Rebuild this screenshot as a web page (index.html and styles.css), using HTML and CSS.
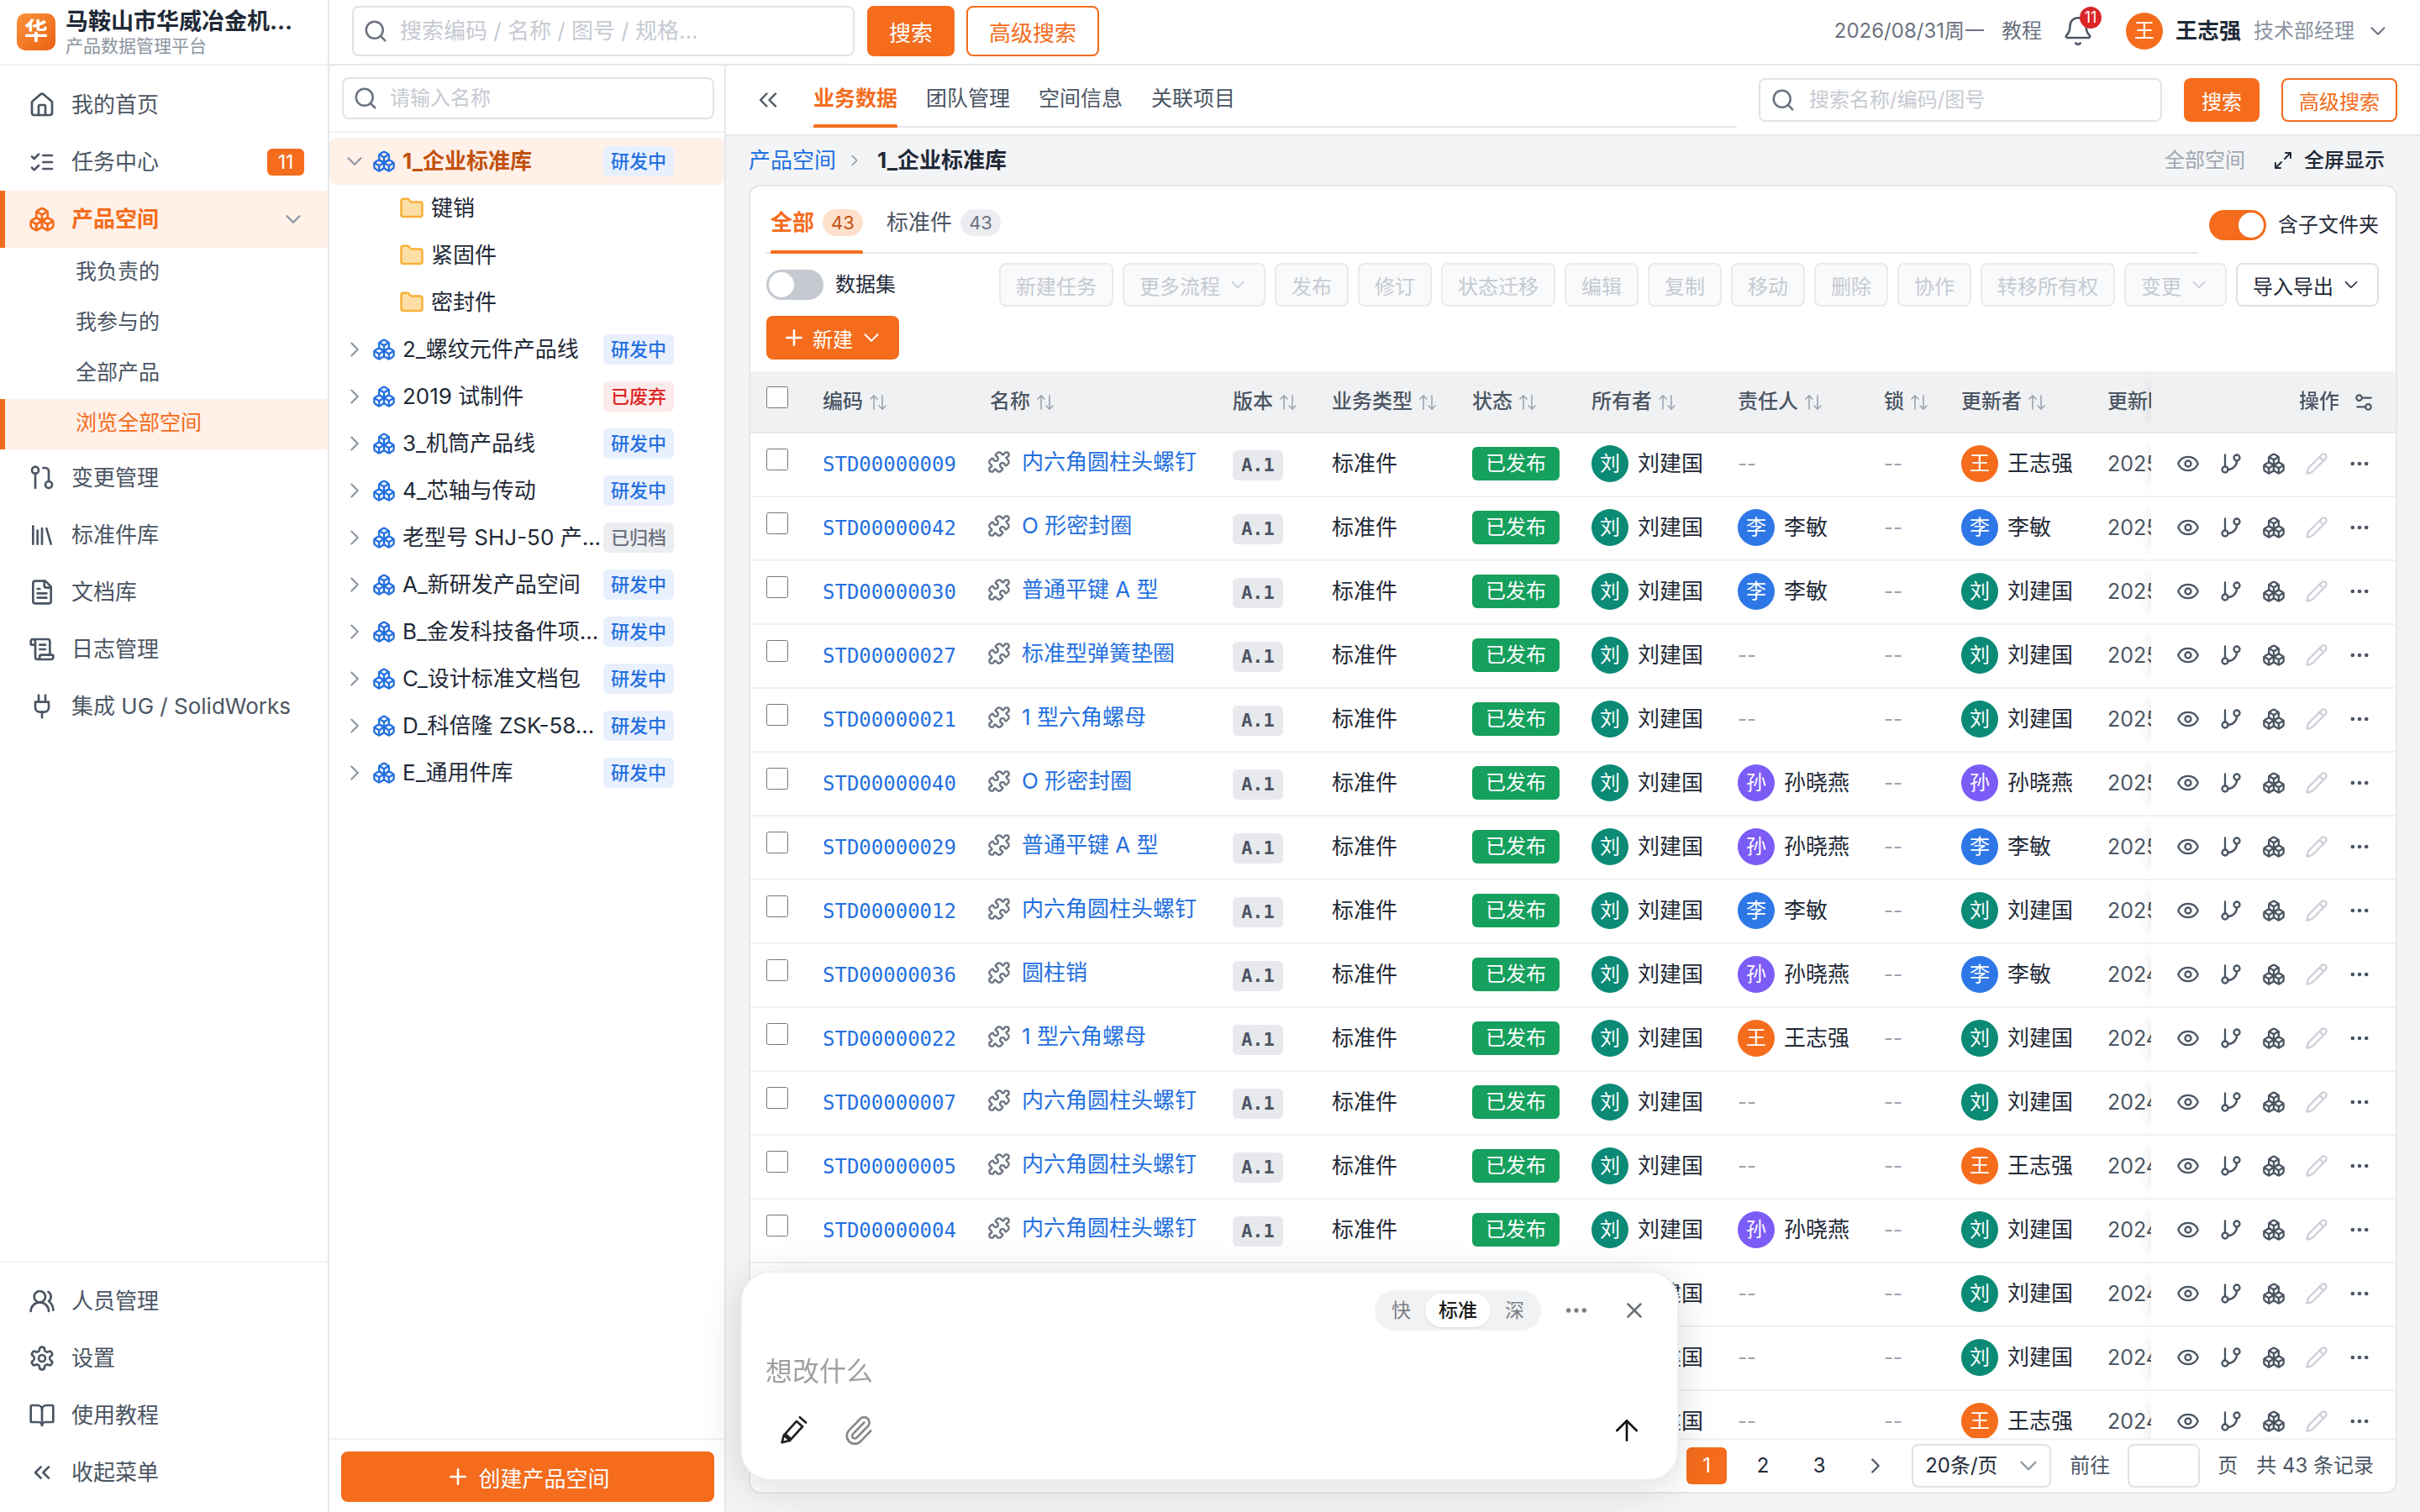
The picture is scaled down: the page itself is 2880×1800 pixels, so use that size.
FILE: index.html
```html
<!DOCTYPE html>
<html lang="zh-CN">
<head>
    <meta charset="UTF-8">
    <meta name="viewport" content="width=device-width, initial-scale=1.0">
    <title>产品空间</title>
    <link rel="stylesheet" href="styles.css">
</head>
<body>
    <svg class="sprite" xmlns="http://www.w3.org/2000/svg">
        <symbol id="boxes" viewBox="0 0 24 24"><path d="M2.97 12.92A2 2 0 0 0 2 14.63v3.24a2 2 0 0 0 .97 1.71l3 1.8a2 2 0 0 0 2.06 0L12 19v-5.5l-5-3-4.03 2.42Z"/><path d="m7 16.5-4.74-2.85"/><path d="m7 16.5 5-3"/><path d="M7 16.5v5.17"/><path d="M12 13.5V19l3.97 2.38a2 2 0 0 0 2.06 0l3-1.8a2 2 0 0 0 .97-1.71v-3.24a2 2 0 0 0-.97-1.71L17 10.5l-5 3Z"/><path d="m17 16.5-5-3"/><path d="m17 16.5 4.74-2.85"/><path d="M17 16.5v5.17"/><path d="M7.97 4.42A2 2 0 0 0 7 6.13v4.37l5 3 5-3V6.13a2 2 0 0 0-.97-1.71l-3-1.8a2 2 0 0 0-2.06 0l-3 1.8Z"/><path d="M12 8 7.26 5.15"/><path d="m12 8 4.74-2.85"/><path d="M12 13.5V8"/></symbol>
        <symbol id="house" viewBox="0 0 24 24"><path d="M15 21v-8a1 1 0 0 0-1-1h-4a1 1 0 0 0-1 1v8"/><path d="M3 10a2 2 0 0 1 .709-1.528l7-5.999a2 2 0 0 1 2.582 0l7 5.999A2 2 0 0 1 21 10v9a2 2 0 0 1-2 2H5a2 2 0 0 1-2-2z"/></symbol>
        <symbol id="checks" viewBox="0 0 24 24"><path d="m3 17 2 2 4-4"/><path d="m3 7 2 2 4-4"/><path d="M13 6h8"/><path d="M13 12h8"/><path d="M13 18h8"/></symbol>
        <symbol id="change" viewBox="0 0 24 24"><circle cx="6" cy="5" r="3"/><path d="M6 8v13"/><path d="M13 3h2a3 3 0 0 1 3 3v9"/><circle cx="18" cy="18" r="3"/></symbol>
        <symbol id="library" viewBox="0 0 24 24"><path d="m16 6 4 14"/><path d="M12 6v14"/><path d="M8 8v12"/><path d="M4 4v16"/></symbol>
        <symbol id="file" viewBox="0 0 24 24"><path d="M15 2H6a2 2 0 0 0-2 2v16a2 2 0 0 0 2 2h12a2 2 0 0 0 2-2V7Z"/><path d="M14 2v4a2 2 0 0 0 2 2h4"/><path d="M10 9H8"/><path d="M16 13H8"/><path d="M16 17H8"/></symbol>
        <symbol id="scroll" viewBox="0 0 24 24"><path d="M15 12h-5"/><path d="M15 8h-5"/><path d="M19 17V5a2 2 0 0 0-2-2H4"/><path d="M8 21h12a2 2 0 0 0 2-2v-1a1 1 0 0 0-1-1H11a1 1 0 0 0-1 1v1a2 2 0 1 1-4 0V5a2 2 0 1 0-4 0v2a1 1 0 0 0 1 1h3"/></symbol>
        <symbol id="plug" viewBox="0 0 24 24"><path d="M12 22v-5"/><path d="M9 8V2"/><path d="M15 8V2"/><path d="M18 8v5a4 4 0 0 1-4 4h-4a4 4 0 0 1-4-4V8Z"/></symbol>
        <symbol id="users" viewBox="0 0 24 24"><path d="M18 21a8 8 0 0 0-16 0"/><circle cx="10" cy="8" r="5"/><path d="M22 20c0-3.37-2-6.5-4-8a5 5 0 0 0-.45-8.3"/></symbol>
        <symbol id="gear" viewBox="0 0 24 24"><path d="M12.22 2h-.44a2 2 0 0 0-2 2v.18a2 2 0 0 1-1 1.73l-.43.25a2 2 0 0 1-2 0l-.15-.08a2 2 0 0 0-2.73.73l-.22.38a2 2 0 0 0 .73 2.73l.15.1a2 2 0 0 1 1 1.72v.51a2 2 0 0 1-1 1.74l-.15.09a2 2 0 0 0-.73 2.73l.22.38a2 2 0 0 0 2.73.73l.15-.08a2 2 0 0 1 2 0l.43.25a2 2 0 0 1 1 1.73V20a2 2 0 0 0 2 2h.44a2 2 0 0 0 2-2v-.18a2 2 0 0 1 1-1.73l.43-.25a2 2 0 0 1 2 0l.15.08a2 2 0 0 0 2.73-.73l.22-.39a2 2 0 0 0-.73-2.73l-.15-.08a2 2 0 0 1-1-1.74v-.5a2 2 0 0 1 1-1.74l.15-.09a2 2 0 0 0 .73-2.73l-.22-.38a2 2 0 0 0-2.73-.73l-.15.08a2 2 0 0 1-2 0l-.43-.25a2 2 0 0 1-1-1.73V4a2 2 0 0 0-2-2z"/><circle cx="12" cy="12" r="3"/></symbol>
        <symbol id="book" viewBox="0 0 24 24"><path d="M12 7v14"/><path d="M3 18a1 1 0 0 1-1-1V4a1 1 0 0 1 1-1h5a4 4 0 0 1 4 4 4 4 0 0 1 4-4h5a1 1 0 0 1 1 1v13a1 1 0 0 1-1 1h-6a3 3 0 0 0-3 3 3 3 0 0 0-3-3z"/></symbol>
        <symbol id="dleft" viewBox="0 0 24 24"><path d="m11 17-5-5 5-5"/><path d="m18 17-5-5 5-5"/></symbol>
        <symbol id="search" viewBox="0 0 24 24"><circle cx="11" cy="11" r="8"/><path d="m21 21-4.3-4.3"/></symbol>
        <symbol id="bell" viewBox="0 0 24 24"><path d="M10.268 21a2 2 0 0 0 3.464 0"/><path d="M3.262 15.326A1 1 0 0 0 4 17h16a1 1 0 0 0 .74-1.673C19.41 13.956 18 12.499 18 8A6 6 0 0 0 6 8c0 4.499-1.411 5.956-2.738 7.326"/></symbol>
        <symbol id="puzzle" viewBox="0 0 24 24"><path d="M15.39 4.39a1 1 0 0 0 1.68-.474 2.5 2.5 0 1 1 3.014 3.015 1 1 0 0 0-.474 1.68l1.683 1.682a2.414 2.414 0 0 1 0 3.414L19.61 15.39a1 1 0 0 1-1.68-.474 2.5 2.5 0 1 0-3.014 3.015 1 1 0 0 1 .474 1.68l-1.683 1.682a2.414 2.414 0 0 1-3.414 0L8.61 19.61a1 1 0 0 0-1.68.474 2.5 2.5 0 1 1-3.014-3.015 1 1 0 0 0 .474-1.68l-1.683-1.682a2.414 2.414 0 0 1 0-3.414L4.39 8.61a1 1 0 0 1 1.68.474 2.5 2.5 0 1 0 3.014-3.015 1 1 0 0 1-.474-1.68l1.683-1.682a2.414 2.414 0 0 1 3.414 0z"/></symbol>
        <symbol id="eye" viewBox="0 0 24 24"><path d="M2.062 12.348a1 1 0 0 1 0-.696 10.75 10.75 0 0 1 19.876 0 1 1 0 0 1 0 .696 10.75 10.75 0 0 1-19.876 0"/><circle cx="12" cy="12" r="3"/></symbol>
        <symbol id="branch" viewBox="0 0 24 24"><path d="M6 3v12"/><circle cx="18" cy="6" r="3"/><circle cx="6" cy="18" r="3"/><path d="M18 9a9 9 0 0 1-9 9"/></symbol>
        <symbol id="pencil" viewBox="0 0 24 24"><path d="M21.174 6.812a1 1 0 0 0-3.986-3.987L3.842 16.174a2 2 0 0 0-.5.83l-1.321 4.352a.5.5 0 0 0 .623.622l4.353-1.32a2 2 0 0 0 .83-.497z"/><path d="m15 5 4 4"/></symbol>
        <symbol id="pen" viewBox="0 0 24 24"><path d="M5 15.5 14.5 5l4.5 4L9.500 19.500z"/><path d="M5 15.500 3.500 21l6-1.500"/><path d="m17 2 4.500 4"/><path d="m6.500 15 3 2.700"/></symbol>
        <symbol id="dots" viewBox="0 0 24 24"><circle cx="12" cy="12" r="1"/><circle cx="19" cy="12" r="1"/><circle cx="5" cy="12" r="1"/></symbol>
        <symbol id="expand" viewBox="0 0 24 24"><path d="M15 3h6v6"/><path d="m21 3-7 7"/><path d="m3 21 7-7"/><path d="M9 21H3v-6"/></symbol>
        <symbol id="sliders" viewBox="0 0 24 24"><path d="M20 7h-9"/><path d="M14 17H5"/><circle cx="17" cy="17" r="3"/><circle cx="7" cy="7" r="3"/></symbol>
        <symbol id="clip" viewBox="0 0 24 24"><path d="M13.234 20.252 21 12.3"/><path d="m16 6-8.414 8.586a2 2 0 0 0 0 2.828 2 2 0 0 0 2.828 0l8.414-8.586a4 4 0 0 0 0-5.656 4 4 0 0 0-5.656 0l-8.415 8.585a6 6 0 1 0 8.486 8.486"/></symbol>
        <symbol id="up" viewBox="0 0 24 24"><path d="m5 12 7-7 7 7"/><path d="M12 19V5"/></symbol>
        <symbol id="close" viewBox="0 0 24 24"><path d="M18 6 6 18"/><path d="m6 6 12 12"/></symbol>
        <symbol id="plus" viewBox="0 0 24 24"><path d="M5 12h14"/><path d="M12 5v14"/></symbol>
        <symbol id="down" viewBox="0 0 24 24"><path d="m6 9 6 6 6-6"/></symbol>
        <symbol id="right" viewBox="0 0 24 24"><path d="m9 18 6-6-6-6"/></symbol>
        <symbol id="sort" viewBox="0 0 24 24"><path d="m21 16-4 4-4-4"/><path d="M17 20V4"/><path d="m3 8 4-4 4 4"/><path d="M7 4v16"/></symbol>
        <symbol id="folder" viewBox="0 0 24 24"><path d="M20 20a2 2 0 0 0 2-2V8a2 2 0 0 0-2-2h-7.9a2 2 0 0 1-1.69-.9L9.6 3.9A2 2 0 0 0 7.93 3H4a2 2 0 0 0-2 2v13a2 2 0 0 0 2 2Z"/></symbol>
    </svg>

    <div class="app">
        <aside class="sidebar">
            <div class="brand">
                <div class="logo">华</div>
                <div class="brand-text">
                    <div class="brand-name">马鞍山市华威冶金机...</div>
                    <div class="brand-sub">产品数据管理平台</div>
                </div>
            </div>
            <nav class="nav">
                <a class="nav-item"><svg class="ic"><use href="#house"/></svg>我的首页</a>
                <a class="nav-item"><svg class="ic"><use href="#checks"/></svg>任务中心<span class="nav-count">11</span></a>
                <a class="nav-item active"><svg class="ic"><use href="#boxes"/></svg>产品空间<svg class="ic nav-caret"><use href="#down"/></svg></a>
                <a class="nav-sub">我负责的</a>
                <a class="nav-sub">我参与的</a>
                <a class="nav-sub">全部产品</a>
                <a class="nav-sub active">浏览全部空间</a>
                <a class="nav-item"><svg class="ic"><use href="#change"/></svg>变更管理</a>
                <a class="nav-item"><svg class="ic"><use href="#library"/></svg>标准件库</a>
                <a class="nav-item"><svg class="ic"><use href="#file"/></svg>文档库</a>
                <a class="nav-item"><svg class="ic"><use href="#scroll"/></svg>日志管理</a>
                <a class="nav-item"><svg class="ic"><use href="#plug"/></svg>集成 UG / SolidWorks</a>
            </nav>
            <nav class="nav-bottom">
                <a class="nav-item"><svg class="ic"><use href="#users"/></svg>人员管理</a>
                <a class="nav-item"><svg class="ic"><use href="#gear"/></svg>设置</a>
                <a class="nav-item"><svg class="ic"><use href="#book"/></svg>使用教程</a>
                <a class="nav-item"><svg class="ic"><use href="#dleft"/></svg>收起菜单</a>
            </nav>
        </aside>

        <div class="main">
            <header class="topbar">
                <div class="search search-top"><svg class="ic"><use href="#search"/></svg><span>搜索编码 / 名称 / 图号 / 规格...</span></div>
                <button class="btn btn-primary btn-top">搜索</button>
                <button class="btn btn-outline btn-top">高级搜索</button>
                <div class="top-right">
                    <span class="top-date">2026/08/31周一</span>
                    <span class="top-link">教程</span>
                    <span class="bell"><svg class="ic"><use href="#bell"/></svg><b class="bell-count">11</b></span>
                    <span class="user"><i class="av orange">王</i><b class="user-name">王志强</b><span class="user-role">技术部经理</span><svg class="ic user-caret"><use href="#down"/></svg></span>
                </div>
            </header>

            <div class="body">
                <section class="tree">
                    <div class="tree-search">
                        <div class="search"><svg class="ic"><use href="#search"/></svg><span>请输入名称</span></div>
                    </div>
                    <div class="tree-list">
                        <div class="tree-row selected"><svg class="ic caret"><use href="#down"/></svg><svg class="ic cube"><use href="#boxes"/></svg><span class="tree-name">1_企业标准库</span><span class="tag blue">研发中</span></div>
                        <div class="tree-row child"><svg class="ic folder"><use href="#folder"/></svg><span class="tree-name">键销</span></div>
                        <div class="tree-row child"><svg class="ic folder"><use href="#folder"/></svg><span class="tree-name">紧固件</span></div>
                        <div class="tree-row child"><svg class="ic folder"><use href="#folder"/></svg><span class="tree-name">密封件</span></div>
                        <div class="tree-row"><svg class="ic caret"><use href="#right"/></svg><svg class="ic cube"><use href="#boxes"/></svg><span class="tree-name">2_螺纹元件产品线</span><span class="tag blue">研发中</span></div>
                        <div class="tree-row"><svg class="ic caret"><use href="#right"/></svg><svg class="ic cube"><use href="#boxes"/></svg><span class="tree-name">2019 试制件</span><span class="tag red">已废弃</span></div>
                        <div class="tree-row"><svg class="ic caret"><use href="#right"/></svg><svg class="ic cube"><use href="#boxes"/></svg><span class="tree-name">3_机筒产品线</span><span class="tag blue">研发中</span></div>
                        <div class="tree-row"><svg class="ic caret"><use href="#right"/></svg><svg class="ic cube"><use href="#boxes"/></svg><span class="tree-name">4_芯轴与传动</span><span class="tag blue">研发中</span></div>
                        <div class="tree-row"><svg class="ic caret"><use href="#right"/></svg><svg class="ic cube"><use href="#boxes"/></svg><span class="tree-name">老型号 SHJ-50 产...</span><span class="tag gray">已归档</span></div>
                        <div class="tree-row"><svg class="ic caret"><use href="#right"/></svg><svg class="ic cube"><use href="#boxes"/></svg><span class="tree-name">A_新研发产品空间</span><span class="tag blue">研发中</span></div>
                        <div class="tree-row"><svg class="ic caret"><use href="#right"/></svg><svg class="ic cube"><use href="#boxes"/></svg><span class="tree-name">B_金发科技备件项...</span><span class="tag blue">研发中</span></div>
                        <div class="tree-row"><svg class="ic caret"><use href="#right"/></svg><svg class="ic cube"><use href="#boxes"/></svg><span class="tree-name">C_设计标准文档包</span><span class="tag blue">研发中</span></div>
                        <div class="tree-row"><svg class="ic caret"><use href="#right"/></svg><svg class="ic cube"><use href="#boxes"/></svg><span class="tree-name">D_科倍隆 ZSK-58...</span><span class="tag blue">研发中</span></div>
                        <div class="tree-row"><svg class="ic caret"><use href="#right"/></svg><svg class="ic cube"><use href="#boxes"/></svg><span class="tree-name">E_通用件库</span><span class="tag blue">研发中</span></div>
                    </div>
                    <div class="tree-foot">
                        <button class="btn btn-primary btn-create"><svg class="ic"><use href="#plus"/></svg>创建产品空间</button>
                    </div>
                </section>

                <section class="content">
                    <div class="tabbar">
                        <svg class="ic tab-back"><use href="#dleft"/></svg>
                        <div class="tabs">
                            <a class="tab active">业务数据</a>
                            <a class="tab">团队管理</a>
                            <a class="tab">空间信息</a>
                            <a class="tab">关联项目</a>
                        </div>
                        <div class="search search-tab"><svg class="ic"><use href="#search"/></svg><span>搜索名称/编码/图号</span></div>
                        <button class="btn btn-primary btn-small">搜索</button>
                        <button class="btn btn-outline btn-small">高级搜索</button>
                    </div>

                    <div class="crumb">
                        <a class="crumb-link">产品空间</a>
                        <svg class="ic crumb-sep"><use href="#right"/></svg>
                        <span class="crumb-title">1_企业标准库</span>
                        <span class="crumb-all">全部空间</span>
                        <span class="crumb-full"><svg class="ic"><use href="#expand"/></svg>全屏显示</span>
                    </div>

                    <div class="card">
                        <div class="card-head">
                            <div class="card-tabs">
                                <a class="card-tab active">全部<span class="count">43</span></a>
                                <a class="card-tab">标准件<span class="count">43</span></a>
                            </div>
                            <span class="switch on"></span>
                            <span class="switch-label head-label">含子文件夹</span>
                        </div>
                        <div class="toolbar">
                            <span class="switch"></span>
                            <span class="switch-label">数据集</span>
                            <div class="tool-btns">
                                <button class="tool" disabled>新建任务</button>
                                <button class="tool" disabled>更多流程<svg class="ic"><use href="#down"/></svg></button>
                                <button class="tool" disabled>发布</button>
                                <button class="tool" disabled>修订</button>
                                <button class="tool" disabled>状态迁移</button>
                                <button class="tool" disabled>编辑</button>
                                <button class="tool" disabled>复制</button>
                                <button class="tool" disabled>移动</button>
                                <button class="tool" disabled>删除</button>
                                <button class="tool" disabled>协作</button>
                                <button class="tool" disabled>转移所有权</button>
                                <button class="tool" disabled>变更<svg class="ic"><use href="#down"/></svg></button>
                                <button class="tool tool-on">导入导出<svg class="ic"><use href="#down"/></svg></button>
                            </div>
                        </div>
                        <div class="new-row">
                            <button class="btn btn-primary btn-new"><svg class="ic"><use href="#plus"/></svg>新建<svg class="ic new-caret"><use href="#down"/></svg></button>
                        </div>

                        <div class="table-wrap">
                            <table class="grid">
                                <colgroup>
                                    <col class="w-check"><col class="w-code"><col class="w-name"><col class="w-ver"><col class="w-type"><col class="w-state"><col class="w-user"><col class="w-user"><col class="w-lock"><col class="w-user"><col class="w-date"><col class="w-ops">
                                </colgroup>
                                <thead>
                                    <tr>
                                        <th><input type="checkbox"></th>
                                        <th>编码<svg class="ic sort"><use href="#sort"/></svg></th>
                                        <th>名称<svg class="ic sort"><use href="#sort"/></svg></th>
                                        <th>版本<svg class="ic sort"><use href="#sort"/></svg></th>
                                        <th>业务类型<svg class="ic sort"><use href="#sort"/></svg></th>
                                        <th>状态<svg class="ic sort"><use href="#sort"/></svg></th>
                                        <th>所有者<svg class="ic sort"><use href="#sort"/></svg></th>
                                        <th>责任人<svg class="ic sort"><use href="#sort"/></svg></th>
                                        <th>锁<svg class="ic sort"><use href="#sort"/></svg></th>
                                        <th>更新者<svg class="ic sort"><use href="#sort"/></svg></th>
                                        <th>更新时间<svg class="ic sort"><use href="#sort"/></svg></th>
                                        <th class="ops-head">操作<svg class="ic"><use href="#sliders"/></svg></th>
                                    </tr>
                                </thead>
                                <tbody>
                                    <tr><td><input type="checkbox"></td><td><a class="code">STD00000009</a></td><td><a class="part"><svg class="ic"><use href="#puzzle"/></svg>内六角圆柱头螺钉</a></td><td><span class="ver">A.1</span></td><td>标准件</td><td><span class="state">已发布</span></td><td><span class="person"><i class="av teal">刘</i>刘建国</span></td><td class="none">--</td><td class="none">--</td><td><span class="person"><i class="av orange">王</i>王志强</span></td><td class="date">2025-08-31 10:20</td><td class="ops"><div class="ops-icons"><svg class="ic"><use href="#eye"/></svg><svg class="ic"><use href="#branch"/></svg><svg class="ic"><use href="#boxes"/></svg><svg class="ic off"><use href="#pencil"/></svg><svg class="ic"><use href="#dots"/></svg></div></td></tr>
                                    <tr><td><input type="checkbox"></td><td><a class="code">STD00000042</a></td><td><a class="part"><svg class="ic"><use href="#puzzle"/></svg>O 形密封圈</a></td><td><span class="ver">A.1</span></td><td>标准件</td><td><span class="state">已发布</span></td><td><span class="person"><i class="av teal">刘</i>刘建国</span></td><td><span class="person"><i class="av blue">李</i>李敏</span></td><td class="none">--</td><td><span class="person"><i class="av blue">李</i>李敏</span></td><td class="date">2025-08-30 16:05</td><td class="ops"><div class="ops-icons"><svg class="ic"><use href="#eye"/></svg><svg class="ic"><use href="#branch"/></svg><svg class="ic"><use href="#boxes"/></svg><svg class="ic off"><use href="#pencil"/></svg><svg class="ic"><use href="#dots"/></svg></div></td></tr>
                                    <tr><td><input type="checkbox"></td><td><a class="code">STD00000030</a></td><td><a class="part"><svg class="ic"><use href="#puzzle"/></svg>普通平键 A 型</a></td><td><span class="ver">A.1</span></td><td>标准件</td><td><span class="state">已发布</span></td><td><span class="person"><i class="av teal">刘</i>刘建国</span></td><td><span class="person"><i class="av blue">李</i>李敏</span></td><td class="none">--</td><td><span class="person"><i class="av teal">刘</i>刘建国</span></td><td class="date">2025-08-22 09:41</td><td class="ops"><div class="ops-icons"><svg class="ic"><use href="#eye"/></svg><svg class="ic"><use href="#branch"/></svg><svg class="ic"><use href="#boxes"/></svg><svg class="ic off"><use href="#pencil"/></svg><svg class="ic"><use href="#dots"/></svg></div></td></tr>
                                    <tr><td><input type="checkbox"></td><td><a class="code">STD00000027</a></td><td><a class="part"><svg class="ic"><use href="#puzzle"/></svg>标准型弹簧垫圈</a></td><td><span class="ver">A.1</span></td><td>标准件</td><td><span class="state">已发布</span></td><td><span class="person"><i class="av teal">刘</i>刘建国</span></td><td class="none">--</td><td class="none">--</td><td><span class="person"><i class="av teal">刘</i>刘建国</span></td><td class="date">2025-07-18 14:12</td><td class="ops"><div class="ops-icons"><svg class="ic"><use href="#eye"/></svg><svg class="ic"><use href="#branch"/></svg><svg class="ic"><use href="#boxes"/></svg><svg class="ic off"><use href="#pencil"/></svg><svg class="ic"><use href="#dots"/></svg></div></td></tr>
                                    <tr><td><input type="checkbox"></td><td><a class="code">STD00000021</a></td><td><a class="part"><svg class="ic"><use href="#puzzle"/></svg>1 型六角螺母</a></td><td><span class="ver">A.1</span></td><td>标准件</td><td><span class="state">已发布</span></td><td><span class="person"><i class="av teal">刘</i>刘建国</span></td><td class="none">--</td><td class="none">--</td><td><span class="person"><i class="av teal">刘</i>刘建国</span></td><td class="date">2025-06-11 11:30</td><td class="ops"><div class="ops-icons"><svg class="ic"><use href="#eye"/></svg><svg class="ic"><use href="#branch"/></svg><svg class="ic"><use href="#boxes"/></svg><svg class="ic off"><use href="#pencil"/></svg><svg class="ic"><use href="#dots"/></svg></div></td></tr>
                                    <tr><td><input type="checkbox"></td><td><a class="code">STD00000040</a></td><td><a class="part"><svg class="ic"><use href="#puzzle"/></svg>O 形密封圈</a></td><td><span class="ver">A.1</span></td><td>标准件</td><td><span class="state">已发布</span></td><td><span class="person"><i class="av teal">刘</i>刘建国</span></td><td><span class="person"><i class="av purple">孙</i>孙晓燕</span></td><td class="none">--</td><td><span class="person"><i class="av purple">孙</i>孙晓燕</span></td><td class="date">2025-05-29 08:56</td><td class="ops"><div class="ops-icons"><svg class="ic"><use href="#eye"/></svg><svg class="ic"><use href="#branch"/></svg><svg class="ic"><use href="#boxes"/></svg><svg class="ic off"><use href="#pencil"/></svg><svg class="ic"><use href="#dots"/></svg></div></td></tr>
                                    <tr><td><input type="checkbox"></td><td><a class="code">STD00000029</a></td><td><a class="part"><svg class="ic"><use href="#puzzle"/></svg>普通平键 A 型</a></td><td><span class="ver">A.1</span></td><td>标准件</td><td><span class="state">已发布</span></td><td><span class="person"><i class="av teal">刘</i>刘建国</span></td><td><span class="person"><i class="av purple">孙</i>孙晓燕</span></td><td class="none">--</td><td><span class="person"><i class="av blue">李</i>李敏</span></td><td class="date">2025-04-14 15:22</td><td class="ops"><div class="ops-icons"><svg class="ic"><use href="#eye"/></svg><svg class="ic"><use href="#branch"/></svg><svg class="ic"><use href="#boxes"/></svg><svg class="ic off"><use href="#pencil"/></svg><svg class="ic"><use href="#dots"/></svg></div></td></tr>
                                    <tr><td><input type="checkbox"></td><td><a class="code">STD00000012</a></td><td><a class="part"><svg class="ic"><use href="#puzzle"/></svg>内六角圆柱头螺钉</a></td><td><span class="ver">A.1</span></td><td>标准件</td><td><span class="state">已发布</span></td><td><span class="person"><i class="av teal">刘</i>刘建国</span></td><td><span class="person"><i class="av blue">李</i>李敏</span></td><td class="none">--</td><td><span class="person"><i class="av teal">刘</i>刘建国</span></td><td class="date">2025-02-06 10:03</td><td class="ops"><div class="ops-icons"><svg class="ic"><use href="#eye"/></svg><svg class="ic"><use href="#branch"/></svg><svg class="ic"><use href="#boxes"/></svg><svg class="ic off"><use href="#pencil"/></svg><svg class="ic"><use href="#dots"/></svg></div></td></tr>
                                    <tr><td><input type="checkbox"></td><td><a class="code">STD00000036</a></td><td><a class="part"><svg class="ic"><use href="#puzzle"/></svg>圆柱销</a></td><td><span class="ver">A.1</span></td><td>标准件</td><td><span class="state">已发布</span></td><td><span class="person"><i class="av teal">刘</i>刘建国</span></td><td><span class="person"><i class="av purple">孙</i>孙晓燕</span></td><td class="none">--</td><td><span class="person"><i class="av blue">李</i>李敏</span></td><td class="date">2024-12-19 13:47</td><td class="ops"><div class="ops-icons"><svg class="ic"><use href="#eye"/></svg><svg class="ic"><use href="#branch"/></svg><svg class="ic"><use href="#boxes"/></svg><svg class="ic off"><use href="#pencil"/></svg><svg class="ic"><use href="#dots"/></svg></div></td></tr>
                                    <tr><td><input type="checkbox"></td><td><a class="code">STD00000022</a></td><td><a class="part"><svg class="ic"><use href="#puzzle"/></svg>1 型六角螺母</a></td><td><span class="ver">A.1</span></td><td>标准件</td><td><span class="state">已发布</span></td><td><span class="person"><i class="av teal">刘</i>刘建国</span></td><td><span class="person"><i class="av orange">王</i>王志强</span></td><td class="none">--</td><td><span class="person"><i class="av teal">刘</i>刘建国</span></td><td class="date">2024-11-08 09:15</td><td class="ops"><div class="ops-icons"><svg class="ic"><use href="#eye"/></svg><svg class="ic"><use href="#branch"/></svg><svg class="ic"><use href="#boxes"/></svg><svg class="ic off"><use href="#pencil"/></svg><svg class="ic"><use href="#dots"/></svg></div></td></tr>
                                    <tr><td><input type="checkbox"></td><td><a class="code">STD00000007</a></td><td><a class="part"><svg class="ic"><use href="#puzzle"/></svg>内六角圆柱头螺钉</a></td><td><span class="ver">A.1</span></td><td>标准件</td><td><span class="state">已发布</span></td><td><span class="person"><i class="av teal">刘</i>刘建国</span></td><td class="none">--</td><td class="none">--</td><td><span class="person"><i class="av teal">刘</i>刘建国</span></td><td class="date">2024-10-21 17:38</td><td class="ops"><div class="ops-icons"><svg class="ic"><use href="#eye"/></svg><svg class="ic"><use href="#branch"/></svg><svg class="ic"><use href="#boxes"/></svg><svg class="ic off"><use href="#pencil"/></svg><svg class="ic"><use href="#dots"/></svg></div></td></tr>
                                    <tr><td><input type="checkbox"></td><td><a class="code">STD00000005</a></td><td><a class="part"><svg class="ic"><use href="#puzzle"/></svg>内六角圆柱头螺钉</a></td><td><span class="ver">A.1</span></td><td>标准件</td><td><span class="state">已发布</span></td><td><span class="person"><i class="av teal">刘</i>刘建国</span></td><td class="none">--</td><td class="none">--</td><td><span class="person"><i class="av orange">王</i>王志强</span></td><td class="date">2024-09-12 11:09</td><td class="ops"><div class="ops-icons"><svg class="ic"><use href="#eye"/></svg><svg class="ic"><use href="#branch"/></svg><svg class="ic"><use href="#boxes"/></svg><svg class="ic off"><use href="#pencil"/></svg><svg class="ic"><use href="#dots"/></svg></div></td></tr>
                                    <tr><td><input type="checkbox"></td><td><a class="code">STD00000004</a></td><td><a class="part"><svg class="ic"><use href="#puzzle"/></svg>内六角圆柱头螺钉</a></td><td><span class="ver">A.1</span></td><td>标准件</td><td><span class="state">已发布</span></td><td><span class="person"><i class="av teal">刘</i>刘建国</span></td><td><span class="person"><i class="av purple">孙</i>孙晓燕</span></td><td class="none">--</td><td><span class="person"><i class="av teal">刘</i>刘建国</span></td><td class="date">2024-08-27 14:50</td><td class="ops"><div class="ops-icons"><svg class="ic"><use href="#eye"/></svg><svg class="ic"><use href="#branch"/></svg><svg class="ic"><use href="#boxes"/></svg><svg class="ic off"><use href="#pencil"/></svg><svg class="ic"><use href="#dots"/></svg></div></td></tr>
                                    <tr><td></td><td></td><td></td><td></td><td></td><td></td><td><span class="person"><i class="av teal">刘</i>刘建国</span></td><td class="none">--</td><td class="none">--</td><td><span class="person"><i class="av teal">刘</i>刘建国</span></td><td class="date">2024-08-02 10:18</td><td class="ops"><div class="ops-icons"><svg class="ic"><use href="#eye"/></svg><svg class="ic"><use href="#branch"/></svg><svg class="ic"><use href="#boxes"/></svg><svg class="ic off"><use href="#pencil"/></svg><svg class="ic"><use href="#dots"/></svg></div></td></tr>
                                    <tr><td></td><td></td><td></td><td></td><td></td><td></td><td><span class="person"><i class="av teal">刘</i>刘建国</span></td><td class="none">--</td><td class="none">--</td><td><span class="person"><i class="av teal">刘</i>刘建国</span></td><td class="date">2024-07-16 16:44</td><td class="ops"><div class="ops-icons"><svg class="ic"><use href="#eye"/></svg><svg class="ic"><use href="#branch"/></svg><svg class="ic"><use href="#boxes"/></svg><svg class="ic off"><use href="#pencil"/></svg><svg class="ic"><use href="#dots"/></svg></div></td></tr>
                                    <tr><td></td><td></td><td></td><td></td><td></td><td></td><td><span class="person"><i class="av teal">刘</i>刘建国</span></td><td class="none">--</td><td class="none">--</td><td><span class="person"><i class="av orange">王</i>王志强</span></td><td class="date">2024-06-03 08:32</td><td class="ops"><div class="ops-icons"><svg class="ic"><use href="#eye"/></svg><svg class="ic"><use href="#branch"/></svg><svg class="ic"><use href="#boxes"/></svg><svg class="ic off"><use href="#pencil"/></svg><svg class="ic"><use href="#dots"/></svg></div></td></tr>
                                </tbody>
                            </table>
                        </div>

                        <div class="pager">
                            <span class="page current">1</span>
                            <span class="page">2</span>
                            <span class="page">3</span>
                            <span class="page"><svg class="ic"><use href="#right"/></svg></span>
                            <span class="page-size">20条/页<svg class="ic"><use href="#down"/></svg></span>
                            <span class="page-text go">前往</span>
                            <span class="page-input"></span>
                            <span class="page-text">页</span>
                            <span class="page-text total">共 43 条记录</span>
                        </div>
                    </div>

                    <!-- floating edit box, sits over the table -->
                    <div class="dock">
                        <div class="dock-head">
                            <div class="speed">
                                <span>快</span>
                                <span class="speed-on">标准</span>
                                <span>深</span>
                            </div>
                            <svg class="ic dock-dots"><use href="#dots"/></svg>
                            <svg class="ic dock-close"><use href="#close"/></svg>
                        </div>
                        <div class="dock-hint">想改什么</div>
                        <div class="dock-foot">
                            <svg class="ic dock-pen"><use href="#pen"/></svg>
                            <svg class="ic dock-clip"><use href="#clip"/></svg>
                            <svg class="ic dock-send"><use href="#up"/></svg>
                        </div>
                    </div>
                </section>
            </div>
        </div>
    </div>
</body>
</html>
```
FILE: styles.css
```css
* {
    box-sizing: border-box;
}

html, body {
    margin: 0;
    height: 100%;
    overflow: hidden;
}

body {
    font-family: Inter, "Noto Sans CJK SC", sans-serif;
    font-size: 26px;
    line-height: 1.4;
    color: #1f2937;
    background: #fff;
}

button {
    font-family: inherit;
    border: none;
}

i {
    font-style: normal;
}

.sprite {
    position: absolute;
    width: 0;
    height: 0;
}

.ic {
    width: 30px;
    height: 30px;
    flex: none;
    fill: none;
    stroke: currentColor;
    stroke-width: 2;
    stroke-linecap: round;
    stroke-linejoin: round;
}

.app {
    display: flex;
    height: 100vh;
}

/* sidebar */
.sidebar {
    width: 392px;
    flex: none;
    display: flex;
    flex-direction: column;
    border-right: 2px solid #e5e7eb;
}

.brand {
    height: 78px;
    flex: none;
    display: flex;
    align-items: center;
    padding: 0 20px;
    gap: 12px;
    border-bottom: 2px solid #f0f1f5;
}

.logo {
    width: 46px;
    height: 44px;
    flex: none;
    border-radius: 10px;
    background: linear-gradient(135deg, #fb923c, #ea6212);
    color: #fff;
    font-size: 28px;
    font-weight: 700;
    display: flex;
    align-items: center;
    justify-content: center;
}

.brand-text {
    min-width: 0;
    flex: 1;
}

.brand-name {
    font-size: 27px;
    font-weight: 700;
    line-height: 34px;
    color: #1f2937;
    white-space: nowrap;
}

.brand-sub {
    font-size: 21px;
    line-height: 24px;
    color: #8a93a0;
}

.nav {
    flex: 1;
    padding-top: 13px;
}

.nav-bottom {
    padding: 12px 0 13px;
    border-top: 2px solid #f0f1f5;
}

.nav-item {
    height: 68px;
    display: flex;
    align-items: center;
    gap: 19px;
    padding-left: 34px;
    color: #4b5563;
    white-space: nowrap;
}

.nav-item .ic {
    width: 32px;
    height: 32px;
}

.nav-item.active {
    background: #fff0e8;
    color: #f46c1c;
    font-weight: 700;
    box-shadow: inset 6px 0 0 #f46c1c;
}

.nav-count {
    margin-left: auto;
    margin-right: 28px;
    width: 44px;
    height: 32px;
    border-radius: 6px;
    background: #f46c1c;
    color: #fff;
    font-size: 23px;
    display: flex;
    align-items: center;
    justify-content: center;
}

.nav-item .nav-caret {
    margin-left: auto;
    margin-right: 26px;
    width: 30px;
    height: 30px;
    color: #8a93a0;
    stroke-width: 1.8;
}

.nav-sub {
    display: flex;
    align-items: center;
    height: 60px;
    padding: 0 0 3px 90px;
    font-size: 25px;
    color: #4b5563;
}

.nav-sub.active {
    background: #fff0e8;
    color: #f46c1c;
    box-shadow: inset 6px 0 0 #f46c1c;
}

/* top bar */
.main {
    flex: 1;
    min-width: 0;
    display: flex;
    flex-direction: column;
}

.topbar {
    height: 78px;
    flex: none;
    display: flex;
    align-items: center;
    padding: 0 35px 2px 27px;
    border-bottom: 2px solid #e5e7eb;
}

.search {
    display: flex;
    align-items: center;
    gap: 14px;
    height: 50px;
    padding: 0 11px;
    border: 2px solid #e0e3e8;
    border-radius: 8px;
    background: #fff;
    color: #6b7280;
    font-size: 24px;
    flex: none;
}

.search span {
    color: #c6cad1;
}

.search-top {
    width: 598px;
    height: 60px;
    font-size: 26px;
}

.btn {
    height: 60px;
    flex: none;
    border-radius: 8px;
    font-size: 26px;
    padding: 0 26px;
    display: inline-flex;
    align-items: center;
    justify-content: center;
    white-space: nowrap;
}

.btn-primary {
    background: #f46c1c;
    color: #fff;
}

.btn-outline {
    background: #fff;
    color: #f46c1c;
    border: 2px solid #f46c1c;
}

.btn-top.btn-primary {
    margin-left: 15px;
}

.btn-top.btn-outline {
    margin-left: 14px;
    padding: 0 25px;
}

.top-right {
    margin-left: auto;
    display: flex;
    align-items: center;
}

.top-date {
    font-size: 24px;
    color: #6b7280;
}

.top-link {
    margin-left: 20px;
    font-size: 24px;
    color: #6b7280;
}

.bell {
    position: relative;
    margin-left: 24px;
    width: 38px;
    height: 38px;
    color: #4b5563;
    display: flex;
    align-items: center;
    justify-content: center;
}

.bell .ic {
    width: 38px;
    height: 38px;
    stroke-width: 1.6;
}

.bell-count {
    position: absolute;
    left: 21px;
    top: -10px;
    width: 26px;
    height: 26px;
    border-radius: 50%;
    background: #dc2626;
    color: #fff;
    font-size: 18px;
    font-weight: 400;
    display: flex;
    align-items: center;
    justify-content: center;
}

.user {
    margin-left: 38px;
    display: flex;
    align-items: center;
}

.user-name {
    margin-left: 15px;
    font-size: 26px;
    font-weight: 700;
    color: #1f2937;
}

.user-role {
    margin-left: 15px;
    font-size: 24px;
    color: #8a93a0;
}

.user-caret {
    margin-left: 13px;
    color: #6b7280;
    stroke-width: 1.6;
}

.av {
    width: 44px;
    height: 44px;
    flex: none;
    border-radius: 50%;
    color: #fff;
    font-size: 24px;
    display: flex;
    align-items: center;
    justify-content: center;
}

.av.teal { background: #0b8a75; }
.av.blue { background: #2e77e6; }
.av.purple { background: #7b5cf6; }
.av.orange { background: #f46c1c; }

.body {
    flex: 1;
    min-height: 0;
    display: flex;
}

/* tree panel */
.tree {
    width: 472px;
    flex: none;
    display: flex;
    flex-direction: column;
    border-right: 2px solid #e5e7eb;
    background: #fff;
}

.tree-search {
    height: 80px;
    flex: none;
    padding: 14px 12px 0 15px;
    border-bottom: 2px solid #f0f1f5;
}

.tree-list {
    flex: 1;
    padding-top: 6px;
}

.tree-row {
    height: 56px;
    display: flex;
    align-items: center;
    padding-left: 15px;
    padding-right: 60px;
}

.tree-row.selected {
    background: #fff0e8;
    border-radius: 8px;
    color: #c2500e;
    font-weight: 700;
}

.tree-row.child {
    padding-left: 83px;
}

.caret {
    color: #8a93a0;
    stroke-width: 1.6;
}

.cube {
    width: 28px;
    height: 28px;
    margin-left: 6px;
    color: #2470e0;
}

.folder {
    color: #f7b037;
    fill: #fddfa6;
}

.tree-name {
    flex: 1;
    min-width: 0;
    margin-left: 8px;
    white-space: nowrap;
}

.tree-row.child .tree-name {
    margin-left: 8px;
}

.tag {
    flex: none;
    width: 84px;
    height: 36px;
    border-radius: 6px;
    font-size: 22px;
    font-weight: 500;
    display: flex;
    align-items: center;
    justify-content: center;
}

.tag.blue { background: #e8f0fe; color: #2470e0; }
.tag.red { background: #fdeaea; color: #dc2626; }
.tag.gray { background: #ecedf0; color: #6b7280; }

.tree-foot {
    height: 88px;
    flex: none;
    padding: 14px 12px 0 14px;
    border-top: 2px solid #f0f1f5;
}

.btn-create {
    width: 100%;
    gap: 9px;
}

/* content */
.content {
    position: relative;
    flex: 1;
    min-width: 0;
    display: flex;
    flex-direction: column;
    background: #f3f4f6;
}

.tabbar {
    height: 84px;
    flex: none;
    display: flex;
    align-items: center;
    padding: 0 27px 0 32px;
    background: #fff;
    border-bottom: 2px solid #e5e7eb;
}

.tab-back {
    width: 36px;
    height: 36px;
    color: #4b5563;
    stroke-width: 1.6;
}

.tabs {
    align-self: flex-start;
    width: 1104px;
    height: 74px;
    margin-left: 32px;
    padding-left: 4px;
    display: flex;
    gap: 34px;
    border-bottom: 2px solid #e5e7eb;
}

.tab {
    position: relative;
    padding-top: 22px;
    color: #4b5563;
    font-size: 25px;
}

.tab.active {
    color: #f46c1c;
    font-weight: 700;
}

.tab.active::after {
    content: "";
    position: absolute;
    left: 0;
    right: 0;
    bottom: -2px;
    height: 4px;
    background: #f46c1c;
    border-radius: 2px 2px 0 0;
}

.search-tab {
    width: 480px;
    height: 52px;
    margin-left: 26px;
    padding-left: 12px;
    gap: 16px;
}

.btn-small {
    height: 52px;
    font-size: 24px;
    padding: 0 21px;
}

.btn-small.btn-primary {
    margin-left: 26px;
}

.btn-small.btn-outline {
    margin-left: 26px;
    padding: 0 19px;
}

.crumb {
    height: 58px;
    flex: none;
    display: flex;
    align-items: center;
    padding: 0 42px 0 27px;
}

.crumb-link {
    color: #2470e0;
}

.crumb-sep {
    width: 22px;
    height: 22px;
    margin: 0 16px 0 11px;
    color: #8a93a0;
    stroke-width: 1.6;
}

.crumb-title {
    font-weight: 700;
    color: #1f2937;
}

.crumb-all {
    margin-left: auto;
    font-size: 24px;
    color: #a0a6b0;
}

.crumb-full {
    margin-left: 33px;
    display: flex;
    align-items: center;
    gap: 13px;
    font-size: 24px;
    font-weight: 500;
    color: #1f2937;
}

.crumb-full .ic {
    width: 24px;
    height: 24px;
}

.card {
    flex: 1;
    min-height: 0;
    margin: 0 27px 22px;
    display: flex;
    flex-direction: column;
    background: #fff;
    border: 2px solid #e5e7eb;
    border-radius: 14px;
    overflow: hidden;
}

.card-head {
    height: 80px;
    flex: none;
    display: flex;
    align-items: center;
    padding: 0 20px 0 19px;
}

.card-tabs {
    align-self: stretch;
    flex: 1;
    display: flex;
    padding-left: 5px;
    gap: 28px;
    margin-right: 13px;
    border-bottom: 2px solid #e5e7eb;
}

.card-tab {
    position: relative;
    display: flex;
    align-items: center;
    gap: 10px;
    padding-top: 8px;
    color: #4b5563;
}

.card-tab.active {
    color: #f46c1c;
    font-weight: 700;
}

.card-tab.active::after {
    content: "";
    position: absolute;
    left: 0;
    right: 0;
    bottom: -2px;
    height: 4px;
    background: #f46c1c;
    border-radius: 2px 2px 0 0;
}

.count {
    min-width: 48px;
    height: 32px;
    border-radius: 16px;
    background: #ecedf0;
    color: #6b7280;
    font-size: 22px;
    font-weight: 400;
    display: flex;
    align-items: center;
    justify-content: center;
}

.active .count {
    background: #ffe0cc;
    color: #c2500e;
}

.switch {
    position: relative;
    width: 68px;
    height: 36px;
    flex: none;
    border-radius: 18px;
    background: #c5cad1;
}

.switch::after {
    content: "";
    position: absolute;
    left: 3px;
    top: 3px;
    width: 30px;
    height: 30px;
    border-radius: 50%;
    background: #fff;
}

.switch.on {
    background: #f46c1c;
    margin-top: 12px;
}

.switch.on::after {
    left: 35px;
}

.switch-label {
    margin-left: 14px;
    font-size: 24px;
    color: #1f2937;
    white-space: nowrap;
}

.head-label {
    margin-top: 12px;
}

.toolbar {
    height: 74px;
    flex: none;
    display: flex;
    align-items: center;
    padding: 0 20px 0 19px;
}

.tool-btns {
    margin-left: auto;
    display: flex;
    gap: 11px;
}

.tool {
    height: 52px;
    padding: 0 18px;
    display: flex;
    align-items: center;
    gap: 8px;
    border: 2px solid #e8eaed;
    border-radius: 8px;
    background: #f9fafb;
    color: #c6cad1;
    font-size: 24px;
    white-space: nowrap;
}

.tool .ic {
    width: 26px;
    height: 26px;
    stroke-width: 1.6;
}

.tool-on {
    background: #fff;
    color: #1f2937;
    border-color: #dfe2e7;
}

.new-row {
    flex: none;
    height: 66px;
    padding: 0 19px;
}

.btn-new {
    height: 52px;
    font-size: 24px;
    padding: 0 18px;
    gap: 7px;
}

.new-caret {
    stroke-width: 1.6;
}

/* table */
.table-wrap {
    flex: 1;
    min-height: 0;
    overflow: hidden;
}

.grid {
    width: 2145px;
    table-layout: fixed;
    border-collapse: separate;
    border-spacing: 0;
}

.w-check { width: 66px; }
.w-code { width: 199px; }
.w-name { width: 289px; }
.w-ver { width: 118px; }
.w-type { width: 167px; }
.w-state { width: 142px; }
.w-user { width: 174px; }
.w-lock { width: 92px; }
.w-date { width: 260px; }
.w-ops { width: 291px; }

.grid th {
    height: 74px;
    padding: 0 0 0 20px;
    text-align: left;
    font-size: 24px;
    font-weight: 500;
    color: #4b5563;
    background: #f0f1f3;
    border-bottom: 2px solid #e5e7eb;
    white-space: nowrap;
}

.grid td {
    height: 76px;
    padding: 0 0 2px 20px;
    border-bottom: 2px solid #f0f1f5;
    white-space: nowrap;
    background: #fff;
}

.grid th:first-child,
.grid td:first-child {
    padding-left: 19px;
}

.grid input {
    width: 26px;
    height: 26px;
    margin: 0 0 10px;
    display: block;
}

.sort {
    width: 24px;
    height: 24px;
    margin-left: 6px;
    vertical-align: -5px;
    color: #9ca3af;
    stroke-width: 1.6;
}

.code {
    font-family: "DejaVu Sans Mono", monospace;
    font-size: 24px;
    color: #2470e0;
}

.part {
    display: flex;
    align-items: center;
    gap: 13px;
    color: #2470e0;
    margin-top: -4px;
}

.part .ic {
    width: 28px;
    height: 28px;
    margin-left: -3px;
    color: #6b7280;
}

.ver {
    display: inline-flex;
    align-items: center;
    justify-content: center;
    width: 60px;
    height: 36px;
    margin-top: 4px;
    border-radius: 6px;
    background: #e8e9ed;
    color: #4b5563;
    font-family: "DejaVu Sans Mono", monospace;
    font-size: 22px;
    font-weight: 700;
    vertical-align: middle;
}

.state {
    display: inline-flex;
    align-items: center;
    justify-content: center;
    width: 104px;
    height: 40px;
    border-radius: 6px;
    background: #16a05d;
    color: #fff;
    font-size: 24px;
    vertical-align: middle;
}

.person {
    display: flex;
    align-items: center;
    gap: 11px;
}

.none {
    color: #9ca3af;
    font-size: 24px;
}

.date {
    color: #4b5563;
    font-size: 25px;
}

.grid .ops-head,
.grid .ops {
    position: sticky;
    right: 0;
    box-shadow: -14px 0 16px -14px rgba(0, 0, 0, 0.12);
}

.grid .ops-head {
    padding-right: 25px;
    text-align: right;
}

.ops-head .ic {
    width: 26px;
    height: 26px;
    margin-left: 16px;
    vertical-align: -6px;
}

.ops-icons {
    display: flex;
    gap: 23px;
    padding-left: 10px;
    color: #4b5563;
}

.ops-icons .ic {
    width: 28px;
    height: 28px;
}

.ops-icons .off {
    color: #cdd1d8;
}

/* pager */
.pager {
    height: 64px;
    flex: none;
    display: flex;
    align-items: center;
    justify-content: flex-end;
    padding-right: 26px;
    border-top: 2px solid #f0f1f5;
    font-size: 24px;
}

.page {
    width: 48px;
    height: 44px;
    margin-right: 19px;
    flex: none;
    display: flex;
    align-items: center;
    justify-content: center;
    border-radius: 6px;
    color: #1f2937;
}

.page .ic {
    color: #4b5563;
    stroke-width: 1.8;
}

.page.current {
    background: #f46c1c;
    color: #fff;
}

.page-size {
    width: 166px;
    height: 52px;
    padding: 0 8px 0 14px;
    flex: none;
    display: flex;
    align-items: center;
    justify-content: space-between;
    border: 2px solid #e0e3e8;
    border-radius: 8px;
}

.page-size .ic {
    width: 34px;
    height: 34px;
    color: #8a93a0;
    stroke-width: 1.6;
}

.page-text {
    color: #4b5563;
    white-space: nowrap;
}

.go {
    margin-left: 22px;
}

.page-input {
    width: 86px;
    height: 52px;
    margin: 0 21px;
    flex: none;
    border: 2px solid #e0e3e8;
    border-radius: 8px;
}

.total {
    margin-left: 22px;
}

/* floating box */
.dock {
    position: absolute;
    left: 17px;
    bottom: 37px;
    width: 1117px;
    height: 250px;
    z-index: 5;
    display: flex;
    flex-direction: column;
    padding: 21px 36px 0 28px;
    background: #fff;
    border: 2px solid #eceef0;
    border-radius: 36px;
    box-shadow: 0 8px 48px rgba(0, 0, 0, 0.14);
}

.dock-head {
    display: flex;
    align-items: center;
    justify-content: flex-end;
}

.speed {
    width: 198px;
    height: 48px;
    padding: 4px 20px;
    display: flex;
    align-items: center;
    justify-content: space-between;
    border-radius: 24px;
    background: #f1f2f3;
    font-size: 23px;
    color: #7b7f86;
}

.speed-on {
    width: 78px;
    height: 40px;
    display: flex;
    align-items: center;
    justify-content: center;
    border-radius: 20px;
    background: #fff;
    color: #1a1a1a;
    font-weight: 500;
    box-shadow: 0 1px 3px rgba(0, 0, 0, 0.1);
}

.dock-dots {
    width: 32px;
    height: 32px;
    margin-left: 26px;
    color: #7b7f86;
}

.dock-close {
    margin-left: 38px;
    color: #6b6f76;
}

.dock-hint {
    margin-top: 24px;
    font-size: 32px;
    line-height: 50px;
    color: #a0a0a0;
}

.dock-foot {
    margin-top: 25px;
    display: flex;
    align-items: center;
    padding-left: 14px;
}

.dock-foot .ic {
    width: 38px;
    height: 38px;
    stroke-width: 1.7;
}

.dock-pen {
    color: #222;
}

.dock-foot .dock-clip {
    margin-left: 40px;
    color: #888;
}

.dock-foot .dock-send {
    margin-left: auto;
    margin-right: 4px;
    width: 40px;
    height: 40px;
    color: #111;
    stroke-width: 1.6;
}
```
